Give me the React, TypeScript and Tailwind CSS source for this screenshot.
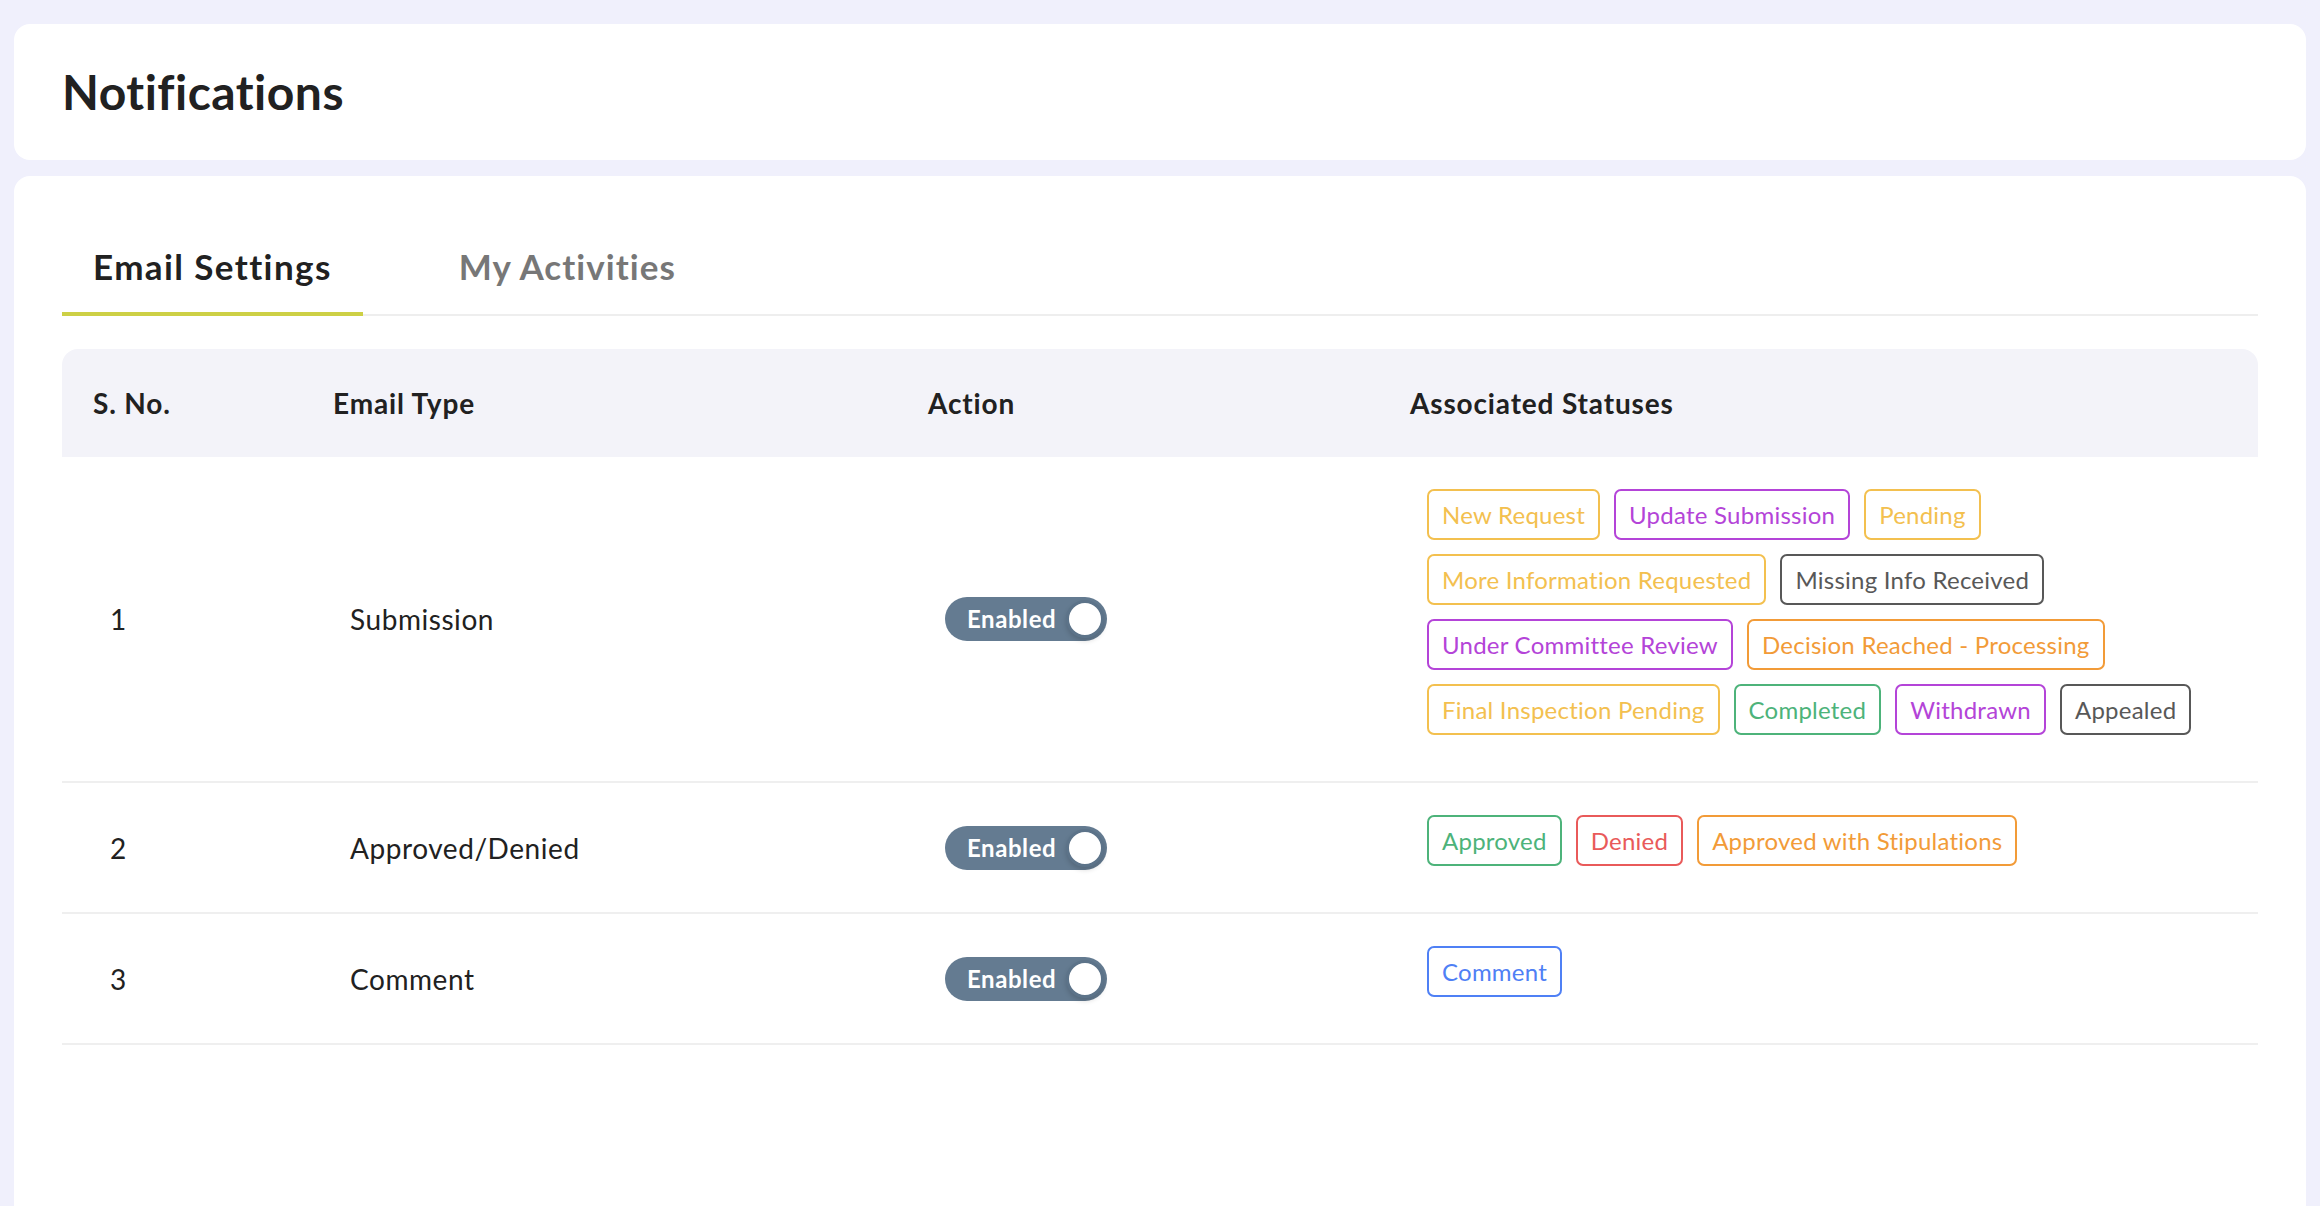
import React from "react";

type Tone = "yellow" | "purple" | "gray" | "orange" | "green" | "red" | "blue";

const toneClass: Record<Tone, string> = {
  yellow: "border-[#f3c04f] text-[#f3c04f]",
  purple: "border-[#b444d8] text-[#b444d8]",
  gray: "border-[#585858] text-[#585858]",
  orange: "border-[#f29b38] text-[#f29b38]",
  green: "border-[#4db37a] text-[#4db37a]",
  red: "border-[#e95a5a] text-[#e95a5a]",
  blue: "border-[#4f80f5] text-[#4f80f5]",
};

interface EmailRow {
  id: number;
  type: string;
  statuses: { label: string; tone: Tone }[];
}

const rows: EmailRow[] = [
  {
    id: 1,
    type: "Submission",
    statuses: [
      { label: "New Request", tone: "yellow" },
      { label: "Update Submission", tone: "purple" },
      { label: "Pending", tone: "yellow" },
      { label: "More Information Requested", tone: "yellow" },
      { label: "Missing Info Received", tone: "gray" },
      { label: "Under Committee Review", tone: "purple" },
      { label: "Decision Reached - Processing", tone: "orange" },
      { label: "Final Inspection Pending", tone: "yellow" },
      { label: "Completed", tone: "green" },
      { label: "Withdrawn", tone: "purple" },
      { label: "Appealed", tone: "gray" },
    ],
  },
  {
    id: 2,
    type: "Approved/Denied",
    statuses: [
      { label: "Approved", tone: "green" },
      { label: "Denied", tone: "red" },
      { label: "Approved with Stipulations", tone: "orange" },
    ],
  },
  {
    id: 3,
    type: "Comment",
    statuses: [{ label: "Comment", tone: "blue" }],
  },
];

function StatusTag({ label, tone }: { label: string; tone: Tone }) {
  return (
    <span
      className={`mb-[14px] flex h-[51px] items-center rounded-[7px] border-2 px-[13px] text-[24px] tracking-[0.01em] ${toneClass[tone]}`}
    >
      {label}
    </span>
  );
}

function Toggle() {
  return (
    <button className="flex h-[44px] w-[162px] items-center justify-between rounded-full bg-[#647b91] pl-[22px] pr-[3px]">
      <span className="text-[24px] font-bold text-white">Enabled</span>
      <span className="h-[38px] w-[38px] rounded-full border-[3px] border-[#5c7389] bg-white shadow-[0_3px_5px_rgba(0,0,0,0.15)]" />
    </button>
  );
}

export default function App() {
  return (
    <div
      className="flex h-screen flex-col gap-4 overflow-hidden bg-[#f0f0fc] px-[14px] pt-[24px] text-[#212121]"
      style={{ fontFamily: "Lato, 'Open Sans', sans-serif" }}
    >
      <div className="flex h-[136px] shrink-0 items-center rounded-2xl bg-white px-[48px]">
        <h1 className="text-[48px] font-bold tracking-[0.01em]">Notifications</h1>
      </div>

      <div className="flex-1 rounded-t-2xl bg-white px-[48px] pt-[68px]">
        {/* tabs */}
        <div className="flex gap-[65px] border-b-2 border-[#eeeeee]">
          <div className="-mb-[2px] border-b-4 border-[#cdd045] px-[31px] pb-[24px] text-[35px] leading-[44px] font-bold tracking-[0.04em]">
            Email Settings
          </div>
          <div className="px-[31px] pb-[24px] text-[35px] leading-[44px] font-bold tracking-[0.03em] text-[#777777]">
            My Activities
          </div>
        </div>

        <div className="mt-[33px]">
          <div className="grid h-[108px] grid-cols-[240px_595px_482px_1fr] items-center rounded-t-2xl bg-[#f3f3f9] text-[28px] font-bold tracking-[0.03em]">
            <div className="px-[31px]">S. No.</div>
            <div className="px-[31px]">Email Type</div>
            <div className="px-[31px]">Action</div>
            <div className="px-[31px]">Associated Statuses</div>
          </div>

          {rows.map((row) => (
            <div
              key={row.id}
              className="grid grid-cols-[240px_595px_482px_1fr] items-center border-b-2 border-[#efefef] text-[28px] tracking-[0.02em]"
            >
              <div className="px-[48px]">{row.id}</div>
              <div className="px-[48px]">{row.type}</div>
              <div className="px-[48px]">
                <Toggle />
              </div>
              <div className="flex flex-wrap gap-x-[14px] px-[48px] pt-[32px] pb-[32px]">
                {row.statuses.map((s) => (
                  <StatusTag key={s.label} label={s.label} tone={s.tone} />
                ))}
              </div>
            </div>
          ))}
        </div>
      </div>
    </div>
  );
}
